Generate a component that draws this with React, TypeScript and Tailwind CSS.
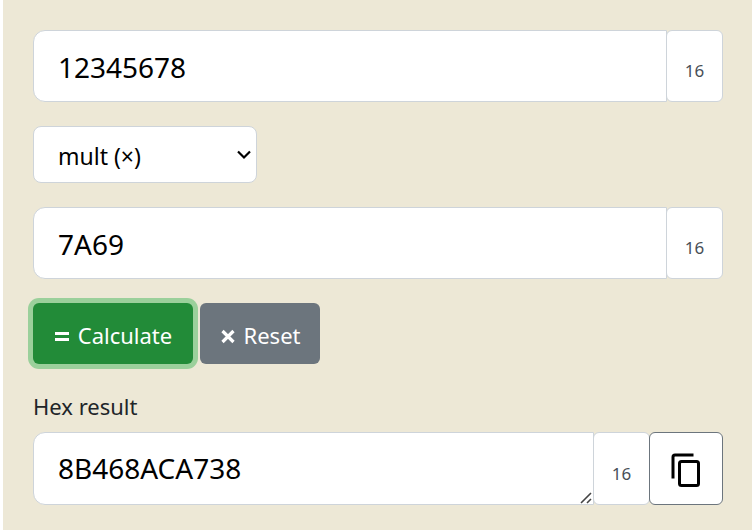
import { useState, type ReactNode } from "react";

const fieldClass =
  "block h-[72px] min-w-0 flex-1 rounded-l-xl border border-[#ced4da] bg-white px-6 pt-0.5 text-[28px] text-black outline-none";

function Base({ children }: { children: ReactNode }) {
  return (
    <span className="-ml-px flex w-[57px] items-center justify-center rounded-md border border-[#ced4da] bg-white pt-2.5 text-[17px] text-[#495057]">
      {children}
    </span>
  );
}

function NumberField({
  label,
  value,
  onChange,
}: {
  label: string;
  value: string;
  onChange: (value: string) => void;
}) {
  return (
    <div className="flex">
      <input
        type="text"
        aria-label={label}
        value={value}
        onChange={(e) => onChange(e.target.value)}
        className={fieldClass}
      />
      <Base>16</Base>
    </div>
  );
}

export default function App() {
  const [first, setFirst] = useState("12345678");
  const [second, setSecond] = useState("7A69");
  const [op, setOp] = useState("mult");
  const [result, setResult] = useState("8B468ACA738");

  const calculate = () => {
    try {
      const a = BigInt("0x" + first);
      const b = BigInt("0x" + second);
      const value = op === "add" ? a + b : op === "sub" ? a - b : op === "div" ? a / b : a * b;
      setResult(value.toString(16).toUpperCase());
    } catch {
      setResult("");
    }
  };

  const reset = () => {
    setFirst("");
    setSecond("");
    setResult("");
  };

  return (
    <div className="min-h-screen bg-white pl-[3px] font-['Noto_Sans',sans-serif] text-[#212529]">
      <main className="flex min-h-screen flex-col gap-6 bg-[#ede8d6] pt-[30px] pr-[29px] pb-6 pl-[30px]">
        <NumberField label="First number" value={first} onChange={setFirst} />

        <div className="relative w-[224px]">
          <select
            aria-label="Operation"
            value={op}
            onChange={(e) => setOp(e.target.value)}
            className="block h-[57px] w-full appearance-none rounded-lg border border-[#ced4da] bg-white px-6 pt-1 text-[23px] text-black outline-none"
          >
            <option value="add">add (+)</option>
            <option value="sub">sub (–)</option>
            <option value="mult">mult (×)</option>
            <option value="div">div (÷)</option>
          </select>
          <svg
            viewBox="0 0 14 10"
            className="pointer-events-none absolute top-6 right-1.5 h-[10px] w-[14px]"
            fill="none"
            stroke="#000"
            strokeWidth="2.2"
          >
            <path d="M1 1.5 7 7.5 13 1.5" />
          </svg>
        </div>

        <NumberField label="Second number" value={second} onChange={setSecond} />

        <div className="flex gap-[7px]">
          <button
            type="button"
            onClick={calculate}
            className="flex h-[61px] w-[160px] items-center justify-center gap-2 rounded-md bg-[#228b38] pt-1 text-[22px] text-white ring-[5px] ring-[#9bd09b]"
          >
            <svg viewBox="0 0 16 16" className="size-4" fill="currentColor">
              <path d="M1 4h14v3H1zM1 10h14v3H1z" />
            </svg>
            Calculate
          </button>
          <button
            type="button"
            onClick={reset}
            className="flex h-[61px] w-[120px] items-center justify-center gap-2 rounded-md bg-[#6c757d] pt-1 text-[22px] text-white"
          >
            <svg viewBox="0 0 16 16" className="size-4" stroke="currentColor" strokeWidth="3.2">
              <path d="M2.500 3 13.500 14M13.500 3 2.500 14" />
            </svg>
            Reset
          </button>
        </div>

        <div>
          <label htmlFor="result" className="block pb-2 text-[22px] leading-9">
            Hex result
          </label>
          <div className="flex">
            <div className="relative flex min-w-0 flex-1">
              <textarea
                id="result"
                rows={1}
                readOnly
                value={result}
                className="block h-[73px] w-full resize-none overflow-hidden rounded-l-xl border border-[#ced4da] bg-white px-6 py-[15px] text-[28px] leading-10 text-black outline-none"
              />
              <svg
                viewBox="0 0 12 12"
                className="pointer-events-none absolute right-[2px] bottom-[1px] size-3"
                fill="none"
                stroke="#444"
                strokeWidth="1.6"
              >
                <path d="M1 11 11 1M7 11 11 7" />
              </svg>
            </div>
            <Base>16</Base>
            <button
              type="button"
              aria-label="Copy result"
              onClick={() => navigator.clipboard?.writeText(result)}
              className="-ml-px flex w-[74px] items-center justify-center rounded-md border border-[#6c757d] bg-white pt-0.5 text-black"
            >
              <svg viewBox="0 0 30 34" className="h-[34px] w-[30px]" fill="none" stroke="currentColor" strokeWidth="3">
                <path d="M2 25.500V4a2 2 0 0 1 2-2h18.500" />
                <rect x="8.500" y="8.500" width="19" height="24" rx="2" />
              </svg>
            </button>
          </div>
        </div>
      </main>
    </div>
  );
}
